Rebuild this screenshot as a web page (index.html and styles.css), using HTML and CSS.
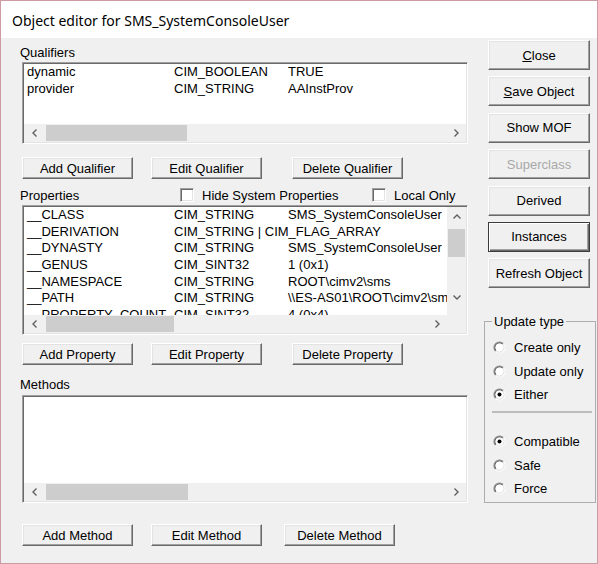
FILE: index.html
```html
<!DOCTYPE html>
<html lang="en">

<head>
    <meta charset="UTF-8">
    <title>Object editor for SMS_SystemConsoleUser</title>
    <link rel="stylesheet" href="styles.css">
</head>

<body>
    <div class="window">
        <div class="titlebar">Object editor for SMS_SystemConsoleUser</div>

        <div class="client">
            <div class="main">
                <!-- Qualifiers -->
                <div class="label">Qualifiers</div>
                <div class="listbox qualifiers">
                    <div class="list-body">
                        <div class="rows">
                            <div class="row"><span class="col-name">dynamic</span><span class="col-type">CIM_BOOLEAN</span><span class="col-value">TRUE</span></div>
                            <div class="row"><span class="col-name">provider</span><span class="col-type">CIM_STRING</span><span class="col-value">AAInstProv</span></div>
                        </div>
                    </div>
                    <div class="hscroll">
                        <div class="sb-btn"><svg width="8" height="8" viewBox="0 0 8 8"><polyline points="5.5,0.5 2,4 5.5,7.5" /></svg></div>
                        <div class="sb-track"><div class="sb-thumb"></div></div>
                        <div class="sb-btn"><svg width="8" height="8" viewBox="0 0 8 8"><polyline points="2.5,0.5 6,4 2.5,7.5" /></svg></div>
                    </div>
                </div>
                <div class="btnrow">
                    <button class="btn">Add Qualifier</button>
                    <button class="btn">Edit Qualifier</button>
                    <button class="btn">Delete Qualifier</button>
                </div>

                <!-- Properties -->
                <div class="proprow">
                    <div class="label prop-label">Properties</div>
                    <div class="check-item hide-system"><span class="check"></span>Hide System Properties</div>
                    <div class="check-item"><span class="check"></span>Local Only</div>
                </div>
                <div class="listbox properties">
                    <div class="list-body">
                        <div class="rows">
                            <div class="row"><span class="col-name">__CLASS</span><span class="col-type">CIM_STRING</span><span class="col-value">SMS_SystemConsoleUser</span></div>
                            <div class="row"><span class="col-name">__DERIVATION</span><span class="col-type">CIM_STRING | CIM_FLAG_ARRAY</span><span class="col-value"></span></div>
                            <div class="row"><span class="col-name">__DYNASTY</span><span class="col-type">CIM_STRING</span><span class="col-value">SMS_SystemConsoleUser</span></div>
                            <div class="row"><span class="col-name">__GENUS</span><span class="col-type">CIM_SINT32</span><span class="col-value">1 (0x1)</span></div>
                            <div class="row"><span class="col-name">__NAMESPACE</span><span class="col-type">CIM_STRING</span><span class="col-value">ROOT\cimv2\sms</span></div>
                            <div class="row"><span class="col-name">__PATH</span><span class="col-type">CIM_STRING</span><span class="col-value">\\ES-AS01\ROOT\cimv2\sms:SMS_SystemConsoleUser</span></div>
                            <div class="row"><span class="col-name">__PROPERTY_COUNT</span><span class="col-type">CIM_SINT32</span><span class="col-value">4 (0x4)</span></div>
                        </div>
                        <div class="vscroll">
                            <div class="sb-btn"><svg width="8" height="8" viewBox="0 0 8 8"><polyline points="0.5,5.5 4,2 7.5,5.5" /></svg></div>
                            <div class="sb-track"><div class="sb-thumb"></div></div>
                            <div class="sb-btn"><svg width="8" height="8" viewBox="0 0 8 8"><polyline points="0.5,2.5 4,6 7.5,2.5" /></svg></div>
                        </div>
                    </div>
                    <div class="hscroll">
                        <div class="sb-btn"><svg width="8" height="8" viewBox="0 0 8 8"><polyline points="5.5,0.5 2,4 5.5,7.5" /></svg></div>
                        <div class="sb-track"><div class="sb-thumb"></div></div>
                        <div class="sb-btn"><svg width="8" height="8" viewBox="0 0 8 8"><polyline points="2.5,0.5 6,4 2.5,7.5" /></svg></div>
                        <div class="sb-corner"></div>
                    </div>
                </div>
                <div class="btnrow">
                    <button class="btn">Add Property</button>
                    <button class="btn">Edit Property</button>
                    <button class="btn">Delete Property</button>
                </div>

                <!-- Methods -->
                <div class="label methods-label">Methods</div>
                <div class="listbox methods">
                    <div class="list-body">
                        <div class="rows"></div>
                    </div>
                    <div class="hscroll">
                        <div class="sb-btn"><svg width="8" height="8" viewBox="0 0 8 8"><polyline points="5.5,0.5 2,4 5.5,7.5" /></svg></div>
                        <div class="sb-track"><div class="sb-thumb"></div></div>
                        <div class="sb-btn"><svg width="8" height="8" viewBox="0 0 8 8"><polyline points="2.5,0.5 6,4 2.5,7.5" /></svg></div>
                    </div>
                </div>
                <div class="btnrow method-btns">
                    <button class="btn">Add Method</button>
                    <button class="btn">Edit Method</button>
                    <button class="btn">Delete Method</button>
                </div>
            </div>

            <div class="side">
                <button class="btn"><u>C</u>lose</button>
                <button class="btn"><u>S</u>ave Object</button>
                <button class="btn">Show MOF</button>
                <button class="btn" disabled>Superclass</button>
                <button class="btn">Derived</button>
                <button class="btn btn-default">Instances</button>
                <button class="btn">Refresh Object</button>

                <fieldset class="group">
                    <legend>Update type</legend>
                    <div class="radio-row first"><svg class="radio" width="13" height="13" viewBox="0 0 13 13"><path class="r-dark1" d="M2.6 10.4A5.5 5.5 0 0 1 10.4 2.6" /><path class="r-light1" d="M10.4 2.6A5.5 5.5 0 0 1 2.6 10.4" /><path class="r-dark2" d="M3.3 9.7A4.5 4.5 0 0 1 9.7 3.3" /><path class="r-light2" d="M9.7 3.3A4.5 4.5 0 0 1 3.3 9.7" /><circle cx="6.5" cy="6.5" r="3.9" fill="#fff" /></svg>Create only</div>
                    <div class="radio-row"><svg class="radio" width="13" height="13" viewBox="0 0 13 13"><path class="r-dark1" d="M2.6 10.4A5.5 5.5 0 0 1 10.4 2.6" /><path class="r-light1" d="M10.4 2.6A5.5 5.5 0 0 1 2.6 10.4" /><path class="r-dark2" d="M3.3 9.7A4.5 4.5 0 0 1 9.7 3.3" /><path class="r-light2" d="M9.7 3.3A4.5 4.5 0 0 1 3.3 9.7" /><circle cx="6.5" cy="6.5" r="3.9" fill="#fff" /></svg>Update only</div>
                    <div class="radio-row"><svg class="radio" width="13" height="13" viewBox="0 0 13 13"><path class="r-dark1" d="M2.6 10.4A5.5 5.5 0 0 1 10.4 2.6" /><path class="r-light1" d="M10.4 2.6A5.5 5.5 0 0 1 2.6 10.4" /><path class="r-dark2" d="M3.3 9.7A4.5 4.5 0 0 1 9.7 3.3" /><path class="r-light2" d="M9.7 3.3A4.5 4.5 0 0 1 3.3 9.7" /><circle cx="6.5" cy="6.5" r="3.9" fill="#fff" /><circle cx="6.5" cy="6.5" r="2" fill="#000" /></svg>Either</div>
                    <div class="separator"></div>
                    <div class="radio-row second"><svg class="radio" width="13" height="13" viewBox="0 0 13 13"><path class="r-dark1" d="M2.6 10.4A5.5 5.5 0 0 1 10.4 2.6" /><path class="r-light1" d="M10.4 2.6A5.5 5.5 0 0 1 2.6 10.4" /><path class="r-dark2" d="M3.3 9.7A4.5 4.5 0 0 1 9.7 3.3" /><path class="r-light2" d="M9.7 3.3A4.5 4.5 0 0 1 3.3 9.7" /><circle cx="6.5" cy="6.5" r="3.9" fill="#fff" /><circle cx="6.5" cy="6.5" r="2" fill="#000" /></svg>Compatible</div>
                    <div class="radio-row"><svg class="radio" width="13" height="13" viewBox="0 0 13 13"><path class="r-dark1" d="M2.6 10.4A5.5 5.5 0 0 1 10.4 2.6" /><path class="r-light1" d="M10.4 2.6A5.5 5.5 0 0 1 2.6 10.4" /><path class="r-dark2" d="M3.3 9.7A4.5 4.5 0 0 1 9.7 3.3" /><path class="r-light2" d="M9.7 3.3A4.5 4.5 0 0 1 3.3 9.7" /><circle cx="6.5" cy="6.5" r="3.9" fill="#fff" /></svg>Safe</div>
                    <div class="radio-row"><svg class="radio" width="13" height="13" viewBox="0 0 13 13"><path class="r-dark1" d="M2.6 10.4A5.5 5.5 0 0 1 10.4 2.6" /><path class="r-light1" d="M10.4 2.6A5.5 5.5 0 0 1 2.6 10.4" /><path class="r-dark2" d="M3.3 9.7A4.5 4.5 0 0 1 9.7 3.3" /><path class="r-light2" d="M9.7 3.3A4.5 4.5 0 0 1 3.3 9.7" /><circle cx="6.5" cy="6.5" r="3.9" fill="#fff" /></svg>Force</div>
                </fieldset>
            </div>
        </div>
    </div>
</body>

</html>
```

FILE: styles.css
```css
/* General */
* {
    box-sizing: border-box;
}

body {
    margin: 0;
    font-family: "Liberation Sans", Arial, sans-serif;
    font-size: 13px;
    color: #000;
}

.window {
    width: 598px;
    height: 564px;
    border: 1px solid #cc9ba3;
    background: #f0f0f0;
    display: flex;
    flex-direction: column;
}

.titlebar {
    height: 37px;
    flex: none;
    background: #fff;
    font-family: "Noto Sans", sans-serif;
    font-size: 14px;
    padding: 2px 0 0 11px;
    display: flex;
    align-items: center;
}

.client {
    flex: 1;
    display: flex;
    padding: 0 1px 0 19px;
}

.main {
    width: 449px;
    padding-top: 7px;
    display: flex;
    flex-direction: column;
}

.side {
    width: 112px;
    margin-left: 15px;
    padding-top: 2px;
    display: flex;
    flex-direction: column;
}

.label {
    height: 15px;
    line-height: 15px;
    white-space: nowrap;
}

.methods-label {
    margin-top: 12px;
}

/* List boxes */
.listbox {
    margin-left: 2px;
    width: 446px;
    flex: none;
    background: #fff;
    border: 1px solid;
    border-color: #a0a0a0 #fff #fff #a0a0a0;
    box-shadow: inset 1px 1px 0 #696969, inset -1px -1px 0 #e3e3e3;
    padding: 1px;
    display: flex;
    flex-direction: column;
}

.qualifiers {
    height: 82px;
    margin-top: 2px;
}

.properties {
    height: 130px;
    margin-top: 2px;
}

.methods {
    height: 108px;
    margin-top: 3px;
}

.list-body {
    flex: 1;
    min-height: 0;
    display: flex;
    overflow: hidden;
}

.rows {
    flex: 1;
    min-width: 0;
    padding-left: 3px;
    overflow: hidden;
}

.row {
    display: flex;
    height: 16.67px;
    line-height: 16.67px;
    white-space: nowrap;
}

.col-name {
    width: 147px;
    flex: none;
}

.col-type {
    width: 114px;
    flex: none;
}

/* Scroll bars */
.hscroll {
    height: 18px;
    flex: none;
    display: flex;
    background: #f0f0f0;
}

.sb-btn {
    width: 21px;
    flex: none;
    display: flex;
    align-items: center;
    justify-content: center;
}

.sb-btn polyline {
    fill: none;
    stroke: #606060;
    stroke-width: 1.4;
}

.sb-track {
    flex: 1;
    display: flex;
    padding: 1px 0 1px 1px;
}

.sb-thumb {
    background: #cdcdcd;
}

.qualifiers .sb-thumb {
    width: 141px;
}

.properties .hscroll .sb-thumb {
    width: 128px;
}

.methods .sb-thumb {
    width: 142px;
}

.sb-corner {
    width: 19px;
    flex: none;
    background: #f0f0f0;
}

.vscroll {
    width: 19px;
    flex: none;
    display: flex;
    flex-direction: column;
    background: #f0f0f0;
}

.vscroll .sb-btn {
    width: auto;
    height: 19px;
}

.vscroll .sb-track {
    display: block;
    padding: 3px 1px 0 1px;
}

.vscroll .sb-thumb {
    height: 28px;
}

.vscroll .sb-btn:last-child {
    height: 24px;
    align-items: flex-start;
    padding-top: 2px;
}

/* Buttons */
.btn {
    width: 111px;
    height: 22px;
    flex: none;
    padding: 0;
    font: inherit;
    color: #000;
    background: #f0f0f0;
    border: 1px solid;
    border-color: #fff #696969 #696969 #fff;
    box-shadow: inset -1px -1px 0 #a0a0a0, inset 1px 1px 0 #e3e3e3;
    white-space: nowrap;
}

.btn:disabled {
    color: #a8a8a8;
}

.btnrow {
    display: flex;
    margin-left: 2px;
    margin-top: 13px;
}

.properties + .btnrow {
    margin-top: 8px;
}

.btnrow .btn:nth-child(2) {
    margin-left: 18px;
}

.btnrow .btn:nth-child(3) {
    margin-left: 30px;
}

.method-btns {
    margin-top: 21px;
}

.method-btns .btn:nth-child(3) {
    margin-left: 22px;
}

.side .btn {
    width: 102px;
    height: 30px;
    margin-left: 4px;
}

.side .btn + .btn {
    margin-top: 6.4px;
}

.side .btn-default {
    border: 1px solid #3c3c3c;
    box-shadow: inset 1px 1px 0 #fff, inset -1px -1px 0 #696969, inset -2px -2px 0 #a0a0a0;
}

/* Check boxes */
.proprow {
    display: flex;
    align-items: center;
    height: 16px;
    margin-top: 8px;
}

.prop-label {
    width: 160px;
}

.check-item {
    display: flex;
    align-items: center;
    white-space: nowrap;
}

.hide-system {
    width: 192px;
}

.check {
    width: 14px;
    height: 14px;
    margin-right: 8px;
    background: #fff;
    border: 1px solid;
    border-color: #a0a0a0 #fff #fff #a0a0a0;
    box-shadow: inset 1px 1px 0 #696969, inset -1px -1px 0 #e3e3e3;
}

/* Update type group */
.group {
    margin: 26px 0 0 0;
    padding: 0 0 2px 0;
    min-width: 0;
    border: 1px solid #adadad;
}

.group legend {
    margin-left: 7px;
    padding: 0 2px;
    line-height: 15px;
}

.radio-row {
    height: 23.3px;
    display: flex;
    align-items: center;
    padding-left: 8px;
    white-space: nowrap;
}

.radio-row.first {
    margin-top: 7px;
}

.radio-row.second {
    margin-top: 17.5px;
}

.radio {
    margin-right: 8px;
    flex: none;
}

.radio path {
    fill: none;
    stroke-width: 1.2;
}

.radio .r-dark1 {
    stroke: #8f8f8f;
}

.radio .r-light1 {
    stroke: #fff;
}

.radio .r-dark2 {
    stroke: #5a5a5a;
}

.radio .r-light2 {
    stroke: #e3e3e3;
}

.separator {
    height: 2px;
    margin: 4.6px 3px 0 7px;
    background: #bcbcbc;
}
```
